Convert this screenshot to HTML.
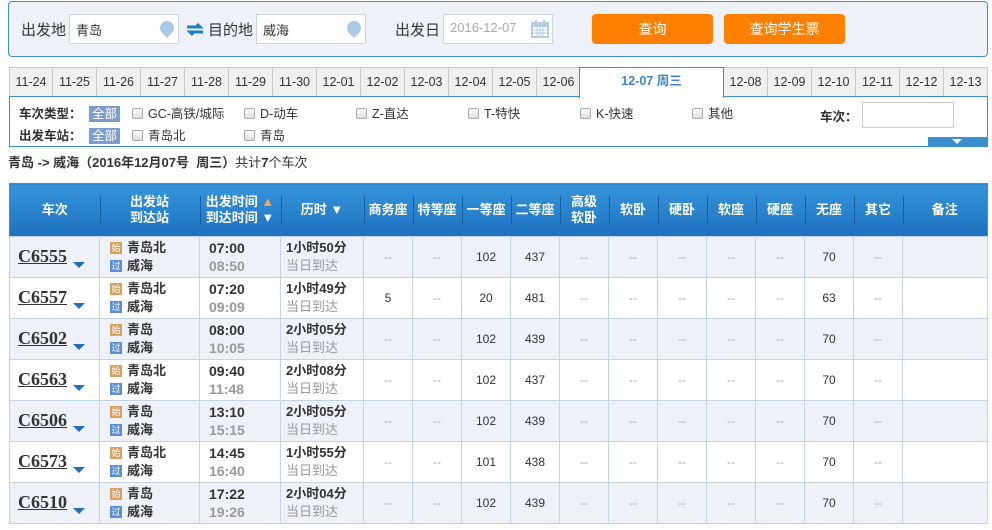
<!DOCTYPE html>
<html><head><meta charset="utf-8"><style>
*{margin:0;padding:0;box-sizing:border-box}
body{width:992px;height:530px;background:#fff;font-family:"Liberation Sans","Noto Sans CJK SC",sans-serif;font-size:12px;color:#333;position:relative;overflow:hidden}
.a{position:absolute}
.top{left:8px;top:1px;width:980px;height:56px;background:#eef1f8;border:1px solid #3c8fcf;border-radius:4px}
.lbl{font-size:15px;color:#333;top:19px}
.inp{top:14px;height:30px;background:#fff;border:1px solid #ccd5e0;font-size:13px;padding:5px 0 0 6px;color:#333}
.pin{width:14px;height:14px;border-radius:50% 50% 50% 0;background:#a9c9e6;transform:rotate(-45deg);top:6px}
.btn{top:14px;height:30px;width:121px;background:#ff7f00;border-radius:4px;color:#fff;font-size:14px;text-align:center;line-height:30px}
.tabs{left:9px;top:67px;height:30px}
.tab{position:absolute;top:0;height:30px;width:44px;background:#f0f0f0;border:1px solid #c9c9c9;border-bottom:none;border-left:none;font-size:12.5px;text-align:center;line-height:29px;color:#333}
.filter{left:9px;top:96px;width:979px;height:51px;border:1px solid #3c8fcf;border-top:none}
.cb{display:inline-block;width:11px;height:11px;border:1px solid #aaa;border-radius:2px;background:linear-gradient(#fff,#ddd);vertical-align:-1px;margin-right:5px}
.fl{font-size:12.5px;top:0}
.all{background:#7b9ccf;color:#fff;padding:1px 3px;font-size:12.5px}
table{position:absolute;left:9px;top:183px;border-collapse:collapse;width:979px;table-layout:fixed;border:1px solid #3c8fcf}
th{height:53px;background:linear-gradient(#3596db,#1f70bf);color:#fff;font-size:13px;font-weight:bold;line-height:16px;position:relative}
th+th:before{content:"";position:absolute;left:0;top:12px;height:29px;border-left:1px solid #155e9f}
td{height:41px;border:1px solid #c2d5e6;text-align:center;font-size:12px;color:#333}
td.g{color:#aaa}
tr.o td{background:#eef1f8}
td.f{text-align:left;padding-left:8px}
.tn{font-family:"Liberation Serif",serif;font-weight:bold;font-size:18px;text-decoration:underline;color:#333}
.tri{display:inline-block;border-left:6px solid transparent;border-right:6px solid transparent;border-top:6px solid #1e6fbf;margin-left:6px;vertical-align:-6px}
.st{text-align:left;padding-left:10px;line-height:18px;font-size:13px;font-weight:bold}
.ic{display:inline-block;width:12px;height:12px;font-size:9px;line-height:12px;text-align:center;color:#fff;margin-right:5px;vertical-align:1px;font-weight:normal}
.s{background:#d8a060}.p{background:#5b8fd4}
.tm{text-align:left;padding-left:9px;font-weight:bold;font-size:14px;line-height:18px}
.tm span{color:#999}
.du{text-align:left;padding-left:5px;font-weight:bold;font-size:13px;line-height:18px}
.du span{color:#999;font-weight:normal}
</style></head><body>
<div class="a top"></div>
<div class="a lbl" style="left:21px">出发地</div>
<div class="a inp" style="left:69px;width:110px">青岛<div class="a pin" style="left:90px"></div></div>
<svg class="a" style="left:186px;top:22px" width="18" height="15" viewBox="0 0 18 15"><path d="M1 5h13l-3-3M17 10H4l3 3" stroke="#1f7fc6" stroke-width="3" fill="none"/></svg>
<div class="a lbl" style="left:208px">目的地</div>
<div class="a inp" style="left:256px;width:110px">威海<div class="a pin" style="left:90px"></div></div>
<div class="a lbl" style="left:395px">出发日</div>
<div class="a inp" style="left:443px;width:110px;color:#aaa">2016-12-07
<svg class="a" style="left:86px;top:4px" width="20" height="20" viewBox="0 0 20 20"><rect x="1" y="3" width="18" height="16" fill="#b4cce4"/><rect x="3" y="8" width="14" height="9" fill="#fff"/><path d="M3 11h14M3 14h14M7 8v9M10 8v9M13 8v9" stroke="#b4cce4"/><rect x="5" y="1" width="2" height="4" fill="#b4cce4"/><rect x="13" y="1" width="2" height="4" fill="#b4cce4"/></svg></div>
<div class="a btn" style="left:592px">查询</div>
<div class="a btn" style="left:724px">查询学生票</div>

<div class="a tabs">
<div class="tab" style="left:0;border-left:1px solid #c9c9c9">11-24</div>
<div class="tab" style="left:44px">11-25</div><div class="tab" style="left:88px">11-26</div><div class="tab" style="left:132px">11-27</div><div class="tab" style="left:176px">11-28</div><div class="tab" style="left:220px">11-29</div><div class="tab" style="left:264px">11-30</div><div class="tab" style="left:308px">12-01</div><div class="tab" style="left:352px">12-02</div><div class="tab" style="left:396px">12-03</div><div class="tab" style="left:440px">12-04</div><div class="tab" style="left:484px">12-05</div><div class="tab" style="left:528px">12-06</div>
<div class="tab" style="left:570px;width:145px;background:#fff;border:1px solid #3c8fcf;border-bottom:none;color:#3c86c8;font-weight:bold;height:31px;line-height:27px">12-07 周三</div>
<div class="tab" style="left:715px">12-08</div><div class="tab" style="left:759px">12-09</div><div class="tab" style="left:803px">12-10</div><div class="tab" style="left:847px">12-11</div><div class="tab" style="left:891px">12-12</div><div class="tab" style="left:935px;width:44px">12-13</div>
</div>
<div class="a" style="left:9px;top:96px;width:570px;border-top:1px solid #3c8fcf"></div>
<div class="a" style="left:723px;top:96px;width:265px;border-top:1px solid #3c8fcf"></div>
<div class="a filter"></div>
<div class="a fl" style="left:19px;top:103px"><b>车次类型：</b></div>
<div class="a fl" style="left:89px;top:103px"><span class="all">全部</span></div>
<div class="a fl" style="left:132px;top:103px"><span class="cb"></span>GC-高铁/城际</div>
<div class="a fl" style="left:244px;top:103px"><span class="cb"></span>D-动车</div>
<div class="a fl" style="left:356px;top:103px"><span class="cb"></span>Z-直达</div>
<div class="a fl" style="left:468px;top:103px"><span class="cb"></span>T-特快</div>
<div class="a fl" style="left:580px;top:103px"><span class="cb"></span>K-快速</div>
<div class="a fl" style="left:692px;top:103px"><span class="cb"></span>其他</div>
<div class="a fl" style="left:820px;top:106px"><b>车次：</b></div>
<div class="a" style="left:862px;top:102px;width:92px;height:26px;border:1px solid #ccc;background:#fff"></div>
<div class="a fl" style="left:19px;top:125px"><b>出发车站：</b></div>
<div class="a fl" style="left:89px;top:125px"><span class="all">全部</span></div>
<div class="a fl" style="left:132px;top:125px"><span class="cb"></span>青岛北</div>
<div class="a fl" style="left:244px;top:125px"><span class="cb"></span>青岛</div>
<div class="a" style="left:928px;top:137px;width:60px;height:10px;background:#3c8fcf"></div>
<div class="a" style="left:952px;top:139px;border-left:5px solid transparent;border-right:5px solid transparent;border-top:5px solid #fff"></div>
<div class="a" style="left:8px;top:152px;font-size:13px"><b>青岛 -&gt; 威海（2016年12月07号&nbsp; 周三）</b>共计<b>7</b>个车次</div>

<table>
<colgroup><col style="width:90px"><col style="width:100px"><col style="width:81px"><col style="width:83px"><col style="width:49px"><col style="width:49px"><col style="width:49px"><col style="width:49px"><col style="width:49px"><col style="width:49px"><col style="width:49px"><col style="width:49px"><col style="width:49px"><col style="width:49px"><col style="width:49px"><col style="width:85px"></colgroup>
<tr><th>车次</th><th>出发站<br>到达站</th><th>出发时间 <span style="color:#f3a35a">▲</span><br>到达时间 ▼</th><th>历时 ▼</th><th>商务座</th><th>特等座</th><th>一等座</th><th>二等座</th><th>高级<br>软卧</th><th>软卧</th><th>硬卧</th><th>软座</th><th>硬座</th><th>无座</th><th>其它</th><th>备注</th></tr>
<tr class="o"><td class="f"><span class="tn">C6555</span><span class="tri"></span></td><td class="st"><span class="ic s">始</span>青岛北<br><span class="ic p">过</span>威海</td><td class="tm">07:00<br><span>08:50</span></td><td class="du">1小时50分<br><span>当日到达</span></td><td class="g">--</td><td class="g">--</td><td>102</td><td>437</td><td class="g">--</td><td class="g">--</td><td class="g">--</td><td class="g">--</td><td class="g">--</td><td>70</td><td class="g">--</td><td></td></tr>
<tr><td class="f"><span class="tn">C6557</span><span class="tri"></span></td><td class="st"><span class="ic s">始</span>青岛北<br><span class="ic p">过</span>威海</td><td class="tm">07:20<br><span>09:09</span></td><td class="du">1小时49分<br><span>当日到达</span></td><td>5</td><td class="g">--</td><td>20</td><td>481</td><td class="g">--</td><td class="g">--</td><td class="g">--</td><td class="g">--</td><td class="g">--</td><td>63</td><td class="g">--</td><td></td></tr>
<tr class="o"><td class="f"><span class="tn">C6502</span><span class="tri"></span></td><td class="st"><span class="ic s">始</span>青岛<br><span class="ic p">过</span>威海</td><td class="tm">08:00<br><span>10:05</span></td><td class="du">2小时05分<br><span>当日到达</span></td><td class="g">--</td><td class="g">--</td><td>102</td><td>439</td><td class="g">--</td><td class="g">--</td><td class="g">--</td><td class="g">--</td><td class="g">--</td><td>70</td><td class="g">--</td><td></td></tr>
<tr><td class="f"><span class="tn">C6563</span><span class="tri"></span></td><td class="st"><span class="ic s">始</span>青岛北<br><span class="ic p">过</span>威海</td><td class="tm">09:40<br><span>11:48</span></td><td class="du">2小时08分<br><span>当日到达</span></td><td class="g">--</td><td class="g">--</td><td>102</td><td>437</td><td class="g">--</td><td class="g">--</td><td class="g">--</td><td class="g">--</td><td class="g">--</td><td>70</td><td class="g">--</td><td></td></tr>
<tr class="o"><td class="f"><span class="tn">C6506</span><span class="tri"></span></td><td class="st"><span class="ic s">始</span>青岛<br><span class="ic p">过</span>威海</td><td class="tm">13:10<br><span>15:15</span></td><td class="du">2小时05分<br><span>当日到达</span></td><td class="g">--</td><td class="g">--</td><td>102</td><td>439</td><td class="g">--</td><td class="g">--</td><td class="g">--</td><td class="g">--</td><td class="g">--</td><td>70</td><td class="g">--</td><td></td></tr>
<tr><td class="f"><span class="tn">C6573</span><span class="tri"></span></td><td class="st"><span class="ic s">始</span>青岛北<br><span class="ic p">过</span>威海</td><td class="tm">14:45<br><span>16:40</span></td><td class="du">1小时55分<br><span>当日到达</span></td><td class="g">--</td><td class="g">--</td><td>101</td><td>438</td><td class="g">--</td><td class="g">--</td><td class="g">--</td><td class="g">--</td><td class="g">--</td><td>70</td><td class="g">--</td><td></td></tr>
<tr class="o"><td class="f"><span class="tn">C6510</span><span class="tri"></span></td><td class="st"><span class="ic s">始</span>青岛<br><span class="ic p">过</span>威海</td><td class="tm">17:22<br><span>19:26</span></td><td class="du">2小时04分<br><span>当日到达</span></td><td class="g">--</td><td class="g">--</td><td>102</td><td>439</td><td class="g">--</td><td class="g">--</td><td class="g">--</td><td class="g">--</td><td class="g">--</td><td>70</td><td class="g">--</td><td></td></tr>
</table>
</body></html>
